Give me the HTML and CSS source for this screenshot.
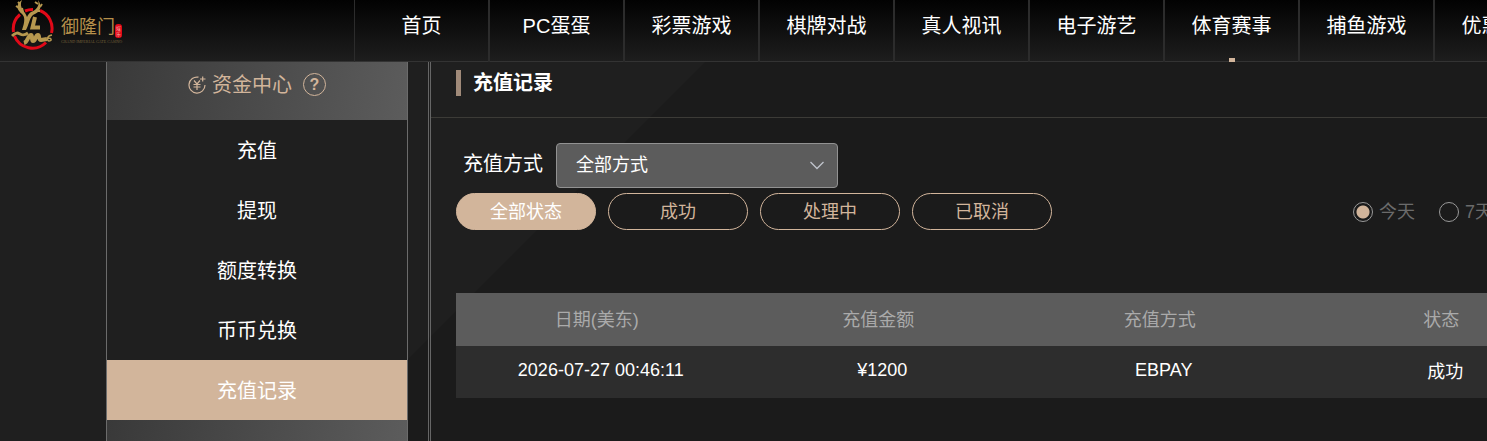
FILE: index.html
```html
<!DOCTYPE html>
<html lang="zh-CN">

<head>
  <meta charset="UTF-8">
  <meta name="viewport" content="width=device-width, initial-scale=1.0">
  <title>充值记录</title>
  <link rel="stylesheet" href="styles.css">
</head>

<body>
  <header class="header">
    <a href="#" class="logo" aria-label="御隆门">
      <svg class="logo-mark" width="44" height="50" viewBox="0 0 44 50" fill="none">
        <path d="M14 11A19.300 19.300 0 0 1 22 9.500M9 14.500A19.300 19.300 0 0 0 2.500 32M3.500 36A19.300 19.300 0 0 0 35 42.500M29 10.500A19.300 19.300 0 0 1 40.500 33" stroke="#e10918" stroke-width="3"/>
        <path d="M11 0C4 5 6 10 11 14C14 17 14 21 11 30L15 30C18 25 18 19 22 15C29 12 32 7 27 0C29 6 25 10 20 12C18 13 17 15 16 17C15 12 7 8 11 0Z" fill="#b6984f"/>
        <path d="M9 4L7 2M8 8L5 6M12 12L11 8M27 4L24 2M29 7L31 4M25 11L29 11" stroke="#b6984f" stroke-width="2"/>
        <path d="M24 17L21.500 27.500H29" stroke="#b6984f" stroke-width="4"/>
        <path d="M1 36C5 32 7 33 9 34S13 36 17 33" stroke="#b6984f" stroke-width="3"/>
        <path d="M13 43C17 42 17 35 20 35C22 35 20 41 22 41C25 41 24 35 27 35C29 35 27 40 30 40L36 39" stroke="#b6984f" stroke-width="4"/>
        <path d="M41 35C35 36 36 41 38 41C41 41 41 38 37 38" stroke="#b6984f" stroke-width="1.500"/>
      </svg>
      <svg class="logo-name" width="64" height="36" viewBox="0 0 64 36">
        <text x="0" y="22" class="logo-title">御隆门</text>
        <rect x="54" y="13" width="7" height="14" rx="3" fill="#e10918"/>
        <text x="55" y="19" class="logo-stamp">娱</text>
        <text x="55" y="25" class="logo-stamp">乐</text>
        <text x="0" y="32" class="logo-sub">GRAND IMPERIAL GATE CASINO</text>
      </svg>
    </a>
    <nav class="nav">
      <a href="#">首页</a>
      <a href="#">PC蛋蛋</a>
      <a href="#">彩票游戏</a>
      <a href="#">棋牌对战</a>
      <a href="#">真人视讯</a>
      <a href="#">电子游艺</a>
      <a href="#" class="active">体育赛事</a>
      <a href="#">捕鱼游戏</a>
      <a href="#">优惠活动</a>
    </nav>
  </header>

  <div class="page">
    <aside class="sidebar">
      <div class="sidebar-head">
        <svg class="icon-money" width="18" height="18" viewBox="0 0 18 18" fill="none" stroke="#d2b59b" stroke-width="1.200">
          <path d="M10.500 1.200A8 8 0 1 0 17 9"/>
          <path d="M6 4.500L9 8L12 4.500M9 8V14M5.500 8.500H12.500M5.500 11H12.500M12 3H17.500M14.700 .5V5.500"/>
        </svg>
        <span class="sidebar-title">资金中心</span>
        <a href="#" class="help">?</a>
      </div>
      <a href="#" class="menu-item">充值</a>
      <a href="#" class="menu-item">提现</a>
      <a href="#" class="menu-item">额度转换</a>
      <a href="#" class="menu-item">币币兑换</a>
      <a href="#" class="menu-item active">充值记录</a>
      <div class="sidebar-foot"></div>
    </aside>

    <main class="content">
      <div class="title">
        <h1>充值记录</h1>
      </div>
      <div class="panel">
        <div class="method">
          <label for="method">充值方式</label>
          <div class="select-box">
            <select id="method">
              <option>全部方式</option>
            </select>
            <svg class="arrow" width="14" height="9" viewBox="0 0 14 9" fill="none" stroke="#c0c4cc" stroke-width="1.300">
              <path d="M.5 1L7 7.500L13.500 1"/>
            </svg>
          </div>
        </div>
        <div class="filters">
          <button type="button" class="status active">全部状态</button>
          <button type="button" class="status">成功</button>
          <button type="button" class="status">处理中</button>
          <button type="button" class="status">已取消</button>
          <div class="days">
            <label><input type="radio" name="day" checked>今天</label>
            <label><input type="radio" name="day">7天</label>
          </div>
        </div>
        <table class="records">
          <thead>
            <tr>
              <th>日期(美东)</th>
              <th>充值金额</th>
              <th>充值方式</th>
              <th>状态</th>
            </tr>
          </thead>
          <tbody>
            <tr>
              <td>2026-07-27 00:46:11</td>
              <td>¥1200</td>
              <td>EBPAY</td>
              <td>成功</td>
            </tr>
          </tbody>
        </table>
      </div>
    </main>
  </div>
</body>

</html>
```
FILE: styles.css
```css
* {
  box-sizing: border-box;
}

body {
  margin: 0;
  min-height: 100vh;
  overflow: hidden;
  display: flex;
  flex-direction: column;
  background: linear-gradient(135deg, #1f1f1f 542px, #1b1b1b 543px);
  color: #fff;
  font-family: "Liberation Sans", "Noto Sans CJK SC", sans-serif;
  font-size: 20px;
}

a {
  color: inherit;
  text-decoration: none;
}

/* header */
.header {
  display: flex;
  background: linear-gradient(#020202, #1e1e1e);
  box-shadow: inset 0 -1px #333;
}

.logo {
  flex: 0 0 354px;
  display: flex;
  align-items: flex-start;
  gap: 6px;
  padding-left: 11px;
}

.logo-name {
  margin-top: 11px;
}

.logo-title {
  fill: #b6904b;
  font-size: 18px;
}

.logo-stamp {
  fill: #f3b0a8;
  font-size: 5px;
}

.logo-sub {
  fill: #77603a;
  font-family: "Liberation Serif", serif;
  font-size: 4px;
}

.nav {
  display: flex;
  border-left: 1px solid #2c2c2c;
}

.nav a {
  flex: 0 0 135px;
  height: 62px;
  border-right: 2px solid #2c2c2c;
  line-height: 52px;
  text-align: center;
}

.nav a.active::after {
  content: "";
  display: block;
  width: 6px;
  height: 4px;
  margin: 6px auto 0;
  background: #d2b59b;
}

/* left menu */
.page {
  flex: 1;
  display: flex;
  align-items: stretch;
  gap: 20px;
  padding-left: 106px;
}

.sidebar {
  flex: 0 0 302px;
  display: flex;
  flex-direction: column;
  border: solid #6b6b6b;
  border-width: 0 1px;
}

.sidebar-head {
  display: flex;
  justify-content: center;
  align-items: flex-start;
  height: 58px;
  padding-top: 11px;
  background: linear-gradient(100deg, #393939, #5c5c5c);
  color: #d2b59b;
  line-height: 24px;
}

.sidebar-foot {
  flex: 1;
  background: linear-gradient(100deg, #393939, #5c5c5c);
}

.icon-money {
  margin: 3px 6px 0 0;
}

.help {
  width: 23px;
  height: 23px;
  margin-left: 11px;
  border: 1px solid #d2b59b;
  border-radius: 50%;
  font-size: 16px;
  font-weight: bold;
  line-height: 21px;
  text-align: center;
}

.menu-item {
  height: 60px;
  line-height: 62px;
  text-align: center;
}

.menu-item.active {
  background: #d2b59b;
}

/* records */
.content {
  flex: 1;
  min-width: 1154px;
  border-left: 3px double #666;
}

.title {
  padding: 8px 0 21px 25px;
  border-bottom: 1px solid #3c3b37;
}

.title h1 {
  margin: 0;
  padding-left: 12px;
  border-left: 5px solid #a08a79;
  font-size: 20px;
  line-height: 26px;
}

.panel {
  padding: 25px 0 0 25px;
}

.method {
  display: flex;
  gap: 13px;
  padding-left: 7px;
  line-height: 42px;
}

.select-box {
  position: relative;
}

.select-box select {
  display: block;
  width: 282px;
  height: 45px;
  padding: 0 40px 2px 19px;
  appearance: none;
  border: 1px solid #929292;
  border-radius: 4px;
  background: #5c5c5c;
  color: #fff;
  font-family: inherit;
  font-size: 18px;
}

.arrow {
  position: absolute;
  top: 18px;
  right: 14px;
  pointer-events: none;
}

.filters {
  display: flex;
  align-items: center;
  gap: 12px;
  margin: 5px 0 63px;
}

.status {
  width: 140px;
  height: 37px;
  padding: 0 0 4px;
  border: 1px solid #d2b59b;
  border-radius: 19px;
  background: none;
  color: #d2b59b;
  font-family: inherit;
  font-size: 18px;
}

.status.active {
  background: #d2b59b;
  color: #fff;
}

.days {
  display: flex;
  gap: 24px;
  margin-left: 289px;
  color: #6b6b6b;
  font-size: 18px;
  line-height: 22px;
}

.days label {
  display: flex;
  gap: 6px;
}

.days input {
  width: 20px;
  height: 20px;
  margin: 1px 0 0;
  appearance: none;
  border: 1px solid #999;
  border-radius: 50%;
}

.days input:checked {
  background: radial-gradient(circle, #d2b59b 6px, transparent 7px);
}

.records {
  width: 100%;
  table-layout: fixed;
  border-collapse: collapse;
  font-size: 18px;
  text-align: center;
}

.records th {
  height: 53px;
  padding: 0 0 4px;
  background: #5c5c5c;
  color: #aaa;
  font-weight: normal;
}

.records td {
  height: 52px;
  padding: 0 0 4px 8px;
  background: #2d2d2d;
}
```
